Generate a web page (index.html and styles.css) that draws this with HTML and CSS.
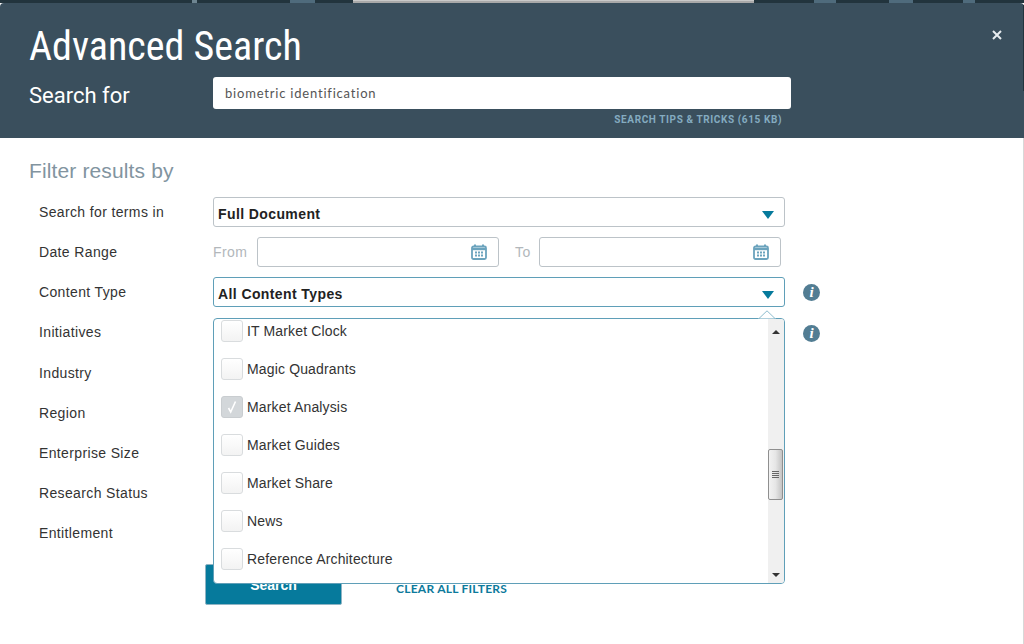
FILE: index.html
```html
<!DOCTYPE html>
<html lang="en">
<head>
<meta charset="utf-8">
<title>Advanced Search</title>
<link rel="stylesheet" href="styles.css">
</head>
<body>
<div class="backdrop">
  <span class="bd bd-a"></span><span class="bd bd-b"></span><span class="bd bd-c"></span><span class="bd bd-d"></span><span class="bd bd-e"></span><span class="bd bd-f"></span><span class="bd bd-g"></span><span class="bd bd-h"></span><span class="bd bd-i"></span><span class="bd bd-j"></span>
</div>
<main class="modal">
  <header class="head">
    <h1 class="title">Advanced Search</h1>
    <button class="close" aria-label="Close"><svg width="10" height="10" viewBox="0 0 10 10"><path d="M1 1l8 8M9 1l-8 8" stroke="#e8edf0" stroke-width="2"/></svg></button>
    <div class="search-row">
      <label class="search-label">Search for</label>
      <div class="search-col">
        <div class="search-box">biometric identification</div>
        <a class="tips">SEARCH TIPS &amp; TRICKS (615 KB)</a>
      </div>
    </div>
  </header>
  <section class="body">
    <h2 class="filter-title">Filter results by</h2>
    <div class="form">
      <div class="row">
        <div class="label">Search for terms in</div>
        <div class="select"><span>Full Document</span><i class="tri"></i></div>
      </div>
      <div class="row">
        <div class="label">Date Range</div>
        <div class="dates">
          <span class="date-lbl from">From</span>
          <div class="date"><svg class="cal" width="16" height="16" viewBox="0 0 16 16"><path d="M4 0.5v3M12 0.5v3" stroke="#6ba3bd" stroke-width="2"/><rect x="1" y="2.5" width="14" height="12.5" rx="1.5" fill="#fff" stroke="#6ba3bd" stroke-width="1.8"/><path d="M1 5h14" stroke="#6ba3bd" stroke-width="2.4"/><path d="M4 7.5h2v2H4zM7 7.5h2v2H7zM10 7.5h2v2h-2zM4 10.5h2v2H4zM7 10.5h2v2H7zM10 10.5h2v2h-2z" fill="#6ba3bd"/></svg></div>
          <span class="date-lbl to">To</span>
          <div class="date"><svg class="cal" width="16" height="16" viewBox="0 0 16 16"><path d="M4 0.5v3M12 0.5v3" stroke="#6ba3bd" stroke-width="2"/><rect x="1" y="2.5" width="14" height="12.5" rx="1.5" fill="#fff" stroke="#6ba3bd" stroke-width="1.8"/><path d="M1 5h14" stroke="#6ba3bd" stroke-width="2.4"/><path d="M4 7.5h2v2H4zM7 7.5h2v2H7zM10 7.5h2v2h-2zM4 10.5h2v2H4zM7 10.5h2v2H7zM10 10.5h2v2h-2z" fill="#6ba3bd"/></svg></div>
        </div>
      </div>
      <div class="row">
        <div class="label">Content Type</div>
        <div class="select open"><span>All Content Types</span><i class="tri"></i></div>
        <span class="info">i</span>
      </div>
      <div class="row row-init">
        <div class="label">Initiatives</div>
        <div class="spacer"></div>
        <span class="info info-low">i</span>
      </div>
      <div class="row"><div class="label">Industry</div></div>
      <div class="row"><div class="label">Region</div></div>
      <div class="row"><div class="label">Enterprise Size</div></div>
      <div class="row"><div class="label">Research Status</div></div>
      <div class="row"><div class="label">Entitlement</div></div>
    </div>
    <div class="actions">
      <button class="btn">Search</button>
      <a class="clear">CLEAR ALL FILTERS</a>
    </div>
    <div class="panel">
      <svg class="caret" width="18" height="9" viewBox="0 0 18 9"><path d="M0 8.5h1L9 .8l8 7.7h1" fill="#fff" stroke="#8dbccd"/></svg>
      <div class="panel-inner">
        <ul class="list">
          <li class="item"><span class="cb"></span>IT Market Clock</li>
          <li class="item"><span class="cb"></span>Magic Quadrants</li>
          <li class="item"><span class="cb checked"><svg width="14" height="14" viewBox="0 0 14 14"><path d="M3.5 8l2.2 4L10.5 1.5" fill="none" stroke="#fff" stroke-width="1.6"/></svg></span>Market Analysis</li>
          <li class="item"><span class="cb"></span>Market Guides</li>
          <li class="item"><span class="cb"></span>Market Share</li>
          <li class="item"><span class="cb"></span>News</li>
          <li class="item"><span class="cb"></span>Reference Architecture</li>
        </ul>
        <div class="scrollbar">
          <span class="arrow up"></span>
          <span class="thumb"><i></i><i></i><i></i><i></i></span>
          <span class="arrow down"></span>
        </div>
      </div>
    </div>
  </section>
</main>
</body>
</html>
```
FILE: styles.css
```css
* { box-sizing: border-box; }
html, body { margin: 0; height: 100%; }
body { width: 1024px; height: 644px; overflow: hidden; background: #fff; font-family: "Liberation Sans", Arial, sans-serif; color: #333; }

.backdrop { display: flex; height: 3px; background: #22343d; }
.bd { display: block; height: 3px; }
.bd-a { width: 155px; }
.bd-b { width: 60px; background: linear-gradient(90deg, #22343d 0 62%, #6e8591 62% 70%, #22343d 70%); }
.bd-c { width: 75px; }
.bd-d { width: 25px; background: #4f6b7c; }
.bd-e { width: 38px; }
.bd-f { width: 401px; background: #a9a9a9; border-top: 1px solid #c9c9c9; }
.bd-g { width: 60px; }
.bd-h { width: 22px; background: #4f6b7c; }
.bd-i { width: 53px; }
.bd-j { flex: 1; background: linear-gradient(90deg, #4f6b7c 0 18%, #22343d 18% 55%, #4f6b7c 55% 64%, #22343d 64%); }

.modal { width: 1024px; height: 641px; background: #fff; border-right: 1px solid #d8d8d8; border-radius: 4px 4px 0 0; }
.head { position: relative; height: 135px; background: #3a4f5d; padding: 23px 0 0 29px; margin-right: -1px; border-radius: 4px 4px 0 0; }
.head::after { content: ""; position: absolute; right: 0; top: 2px; width: 1px; height: 86px; background: #22343d; }
.title { margin: 0; height: 41px; font: 400 40px/41px "Roboto Condensed", "Roboto", sans-serif; font-stretch: 75%; color: #fff; }
.close { position: absolute; top: 26px; right: 21px; width: 12px; height: 12px; padding: 1px; border: 0; background: none; display: flex; }
.search-row { display: flex; margin-top: 10px; }
.search-label { width: 184px; padding-top: 6px; font: 400 22px/26px "Roboto", sans-serif; color: #fff; }
.search-col { display: flex; flex-direction: column; width: 578px; }
.search-box { height: 32px; background: #fff; border-radius: 3px; padding: 0 12px; font: 400 13px/32px "Lato", sans-serif; letter-spacing: .8px; color: #555; }
.tips { align-self: flex-end; margin: 5px 9px 0 0; font: 700 10px/12px "Roboto", sans-serif; letter-spacing: .6px; color: #84abc0; }

.body { position: relative; height: 506px; padding: 0 0 0 29px; }
.filter-title { margin: 0; padding-top: 20px; height: 54px; font: 400 21px/26px "Liberation Sans", sans-serif; letter-spacing: .13px; color: #82949f; }
.form { padding-left: 10px; }
.row { display: flex; align-items: center; height: 30px; margin: 5px 0 10px; font-size: 14px; }
.row-init { margin-bottom: 11px; }
.label { width: 174px; flex: none; line-height: 30px; color: #333; letter-spacing: .36px; }
.select { position: relative; width: 572px; height: 30px; padding: 0 4px; border: 1px solid #bcc3c8; border-radius: 3px; background: #fff; font: 700 14px/32px "Liberation Sans", sans-serif; letter-spacing: .4px; color: #222; }
.select.open { border-color: #5f9fb8; }
.tri { position: absolute; right: 10px; top: 13px; width: 0; height: 0; border-left: 6.5px solid transparent; border-right: 6.5px solid transparent; border-top: 8px solid #067a9c; }
.dates { display: flex; align-items: center; }
.date-lbl { font-size: 14px; letter-spacing: .4px; color: #b2b7bb; }
.date-lbl.from { width: 44px; }
.date-lbl.to { width: 24px; margin-left: 16px; }
.date { position: relative; width: 242px; height: 30px; border: 1px solid #bcc3c8; border-radius: 3px; }
.cal { position: absolute; right: 11px; top: 6px; }
.info { flex: none; display: block; width: 17px; height: 17px; margin-left: 18px; border-radius: 50%; background: #527d93; color: #fff; text-align: center; font: italic 700 15px/17px "Liberation Serif", serif; }
.info-low { margin-top: 2px; }
.spacer { width: 572px; flex: none; }
.actions { display: flex; align-items: center; padding-left: 176px; margin-top: 16px; }
.btn { width: 137px; height: 41px; border: 1px solid #8fb4c4; border-radius: 2px; background: #067a9c; color: #fff; font: 700 14px/40px "Liberation Sans", sans-serif; padding: 0; }
.clear { margin: 8px 0 0 54px; font: 700 12px/14px "Lato", sans-serif; letter-spacing: .25px; color: #0d7a9c; }

.panel { position: absolute; left: 213px; top: 180px; width: 572px; height: 266px; background: #fff; border: 1px solid #5f9fb8; border-radius: 4px; }
.caret { position: absolute; right: 8px; top: -9px; }
.panel-inner { display: flex; height: 264px; overflow: hidden; border-radius: 3px; }
.list { flex: 1; list-style: none; margin: -7px 0 0; padding: 0 0 0 7px; }
.item { display: flex; align-items: center; height: 38px; font-size: 14px; letter-spacing: .15px; color: #333; }
.cb { flex: none; display: flex; align-items: center; justify-content: center; width: 22px; height: 22px; margin-right: 4px; border: 1px solid #d9dcde; border-radius: 3px; background: linear-gradient(#fff, #f3f3f3); }
.cb.checked { background: #d3d7da; border-color: #c9cdd0; }
.scrollbar { position: relative; flex: none; width: 16px; height: 264px; background: #f0f0f0; }
.arrow { position: absolute; left: 4px; width: 0; height: 0; border-left: 4px solid transparent; border-right: 4px solid transparent; }
.arrow.up { top: 11px; border-bottom: 4px solid #333; }
.arrow.down { bottom: 6px; border-top: 4px solid #333; }
.thumb { position: absolute; left: 0; top: 130px; width: 15px; height: 51px; border: 1px solid #8f8f8f; border-radius: 2px; background: linear-gradient(90deg, #f2f2f2, #e6e6e6 50%, #c4c4c4); display: flex; flex-direction: column; justify-content: center; align-items: center; gap: 1px; }
.thumb i { display: block; width: 7px; height: 1px; background: #666; }
```
